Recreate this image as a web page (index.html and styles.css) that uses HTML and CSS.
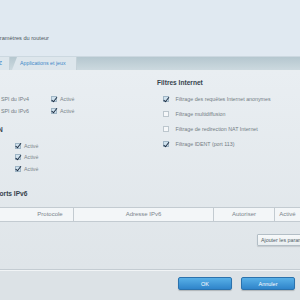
FILE: index.html
```html
<!DOCTYPE html>
<html lang="fr">
<head>
    <meta charset="UTF-8">
    <meta name="viewport" content="width=device-width, initial-scale=1.0">
    <title>Paramètres du routeur</title>
    <link rel="stylesheet" href="styles.css">
</head>
<body>
    <div class="page">
        <header class="top">
            <h1 class="title">Paramètres du routeur</h1>
        </header>

        <nav class="tabs">
            <a class="tab first">DMZ</a>
            <a class="tab">Applications et jeux</a>
        </nav>

        <main class="main">
            <div class="cols">
                <section class="col-left">
                    <h2>Pare-feu</h2>
                    <div class="rows spi">
                        <div class="row"><span class="lbl">Protection du pare-feu SPI du IPv4</span><span class="cb on"></span><span class="val">Activé</span></div>
                        <div class="row"><span class="lbl">Protection du pare-feu SPI du IPv6</span><span class="cb on"></span><span class="val">Activé</span></div>
                    </div>

                    <h2 class="vpn-title">Passthrough VPN</h2>
                    <div class="rows vpn">
                        <div class="row"><span class="lbl">IPSec Passthrough</span><span class="cb on"></span><span class="val">Activé</span></div>
                        <div class="row"><span class="lbl">PPTP Passthrough</span><span class="cb on"></span><span class="val">Activé</span></div>
                        <div class="row"><span class="lbl">L2TP Passthrough</span><span class="cb on"></span><span class="val">Activé</span></div>
                    </div>
                </section>

                <section class="col-right">
                    <h2>Filtres Internet</h2>
                    <div class="rows filters">
                        <div class="row"><span class="cb on"></span><span class="lbl">Filtrage des requêtes Internet anonymes</span></div>
                        <div class="row"><span class="cb"></span><span class="lbl">Filtrage multidiffusion</span></div>
                        <div class="row"><span class="cb"></span><span class="lbl">Filtrage de redirection NAT Internet</span></div>
                        <div class="row"><span class="cb on"></span><span class="lbl">Filtrage IDENT (port 113)</span></div>
                    </div>
                </section>
            </div>

            <section class="ports">
                <h2>Ouverture des ports IPv6</h2>
                <table class="grid">
                    <thead>
                        <tr>
                            <th class="c-desc">Description</th>
                            <th class="c-proto">Protocole</th>
                            <th class="c-addr">Adresse IPv6</th>
                            <th class="c-allow">Autoriser</th>
                            <th class="c-on">Activé</th>
                            <th class="c-edit"></th>
                        </tr>
                    </thead>
                </table>
                <div class="add-row">
                    <button class="add">Ajouter les paramètres IPv6</button>
                </div>
            </section>

            <footer class="actions">
                <button class="btn">OK</button>
                <button class="btn">Annuler</button>
            </footer>
        </main>
    </div>
</body>
</html>
```

FILE: styles.css
```css
html, body {
    margin: 0;
    height: 100%;
    overflow: hidden;
}

body {
    font-family: "Liberation Sans", Arial, sans-serif;
    background-color: #e0e9f1;
}

.page {
    margin-left: -60px;
    width: 400px;
}

.top {
    height: 56px;
    background-color: #e0e9f1;
    border-bottom: 1px solid #ccd8e0;
}

.title {
    margin: 0;
    padding: 34px 0 0 53px;
    font-size: 5.6px;
    line-height: 8px;
    font-weight: normal;
    color: #4d5860;
}

.tabs {
    display: flex;
    gap: 2px;
    height: 13px;
    padding-left: 30px;
    background: linear-gradient(#b5c7cf, #ccd9df);
    border-bottom: 1px solid #e9eef1;
}

.tab {
    width: 65px;
    padding-left: 8px;
    box-sizing: border-box;
    font-size: 5.3px;
    line-height: 13px;
    color: #3d87c8;
    background-color: #dde6ec;
    clip-path: polygon(5px 0, 100% 0, 100% 100%, 0 100%);
    box-shadow: inset -1px 0 0 #c4d1d8;
}

.tab.first {
    width: 40px;
    padding: 0 8px 0 0;
    text-align: right;
}

.main {
    background: linear-gradient(#e9eef2, #dde3e7);
    padding-top: 7px;
    height: 230px;
}

h2 {
    margin: 0;
    font-size: 6.6px;
    line-height: 10px;
    color: #36424c;
}

.cols {
    display: grid;
    grid-template-columns: 217px 1fr;
}

.col-left {
    padding-left: 7px;
}

.row {
    display: flex;
    align-items: center;
    font-size: 5.3px;
    color: #737c84;
}

.rows.spi {
    margin-top: 5.4px;
}

.rows.spi .row {
    height: 11.6px;
}

.rows.spi .lbl {
    width: 104px;
}

.vpn-title {
    margin-top: 8.4px;
}

.rows.vpn {
    margin-top: 5.1px;
}

.rows.vpn .row {
    height: 11.4px;
}

.rows.vpn .lbl {
    width: 68px;
}

.val {
    margin-left: 3px;
    color: #7b848b;
}

.rows.filters {
    margin-top: 3.7px;
    padding-left: 6px;
}

.rows.filters .row {
    height: 15px;
}

.rows.filters .lbl {
    margin-left: 6.5px;
}

.cb {
    position: relative;
    flex: none;
    width: 6px;
    height: 6px;
    box-sizing: border-box;
    border: 1px solid #bcc6cd;
    background-color: #f5f7f9;
}

.cb.on {
    border-color: #9fb5c5;
    background-color: #cfe1ed;
}

.cb.on::after {
    content: "";
    position: absolute;
    left: 1.2px;
    top: -1.5px;
    width: 1.8px;
    height: 4.5px;
    border: solid #1d2d42;
    border-width: 0 1.3px 1.3px 0;
    transform: rotate(38deg);
}

.ports {
    margin-top: 15.2px;
    padding-right: 5px;
}

.ports h2 {
    margin-left: 9px;
}

.grid {
    margin-top: 7.2px;
    width: 100%;
    border-collapse: collapse;
    table-layout: fixed;
}

.grid th {
    height: 13px;
    padding: 0;
    font-size: 6px;
    font-weight: normal;
    color: #7a848c;
    background-color: #f3f6f8;
    border-top: 1px solid #c3cbd1;
    border-bottom: 1px solid #c3cbd1;
    border-left: 1px solid #c3cbd1;
    text-align: center;
}

.grid .c-desc {
    width: 87px;
    border-left: none;
    color: transparent;
}

.grid .c-proto {
    width: 46px;
    border-left: none;
}

.grid .c-addr {
    width: 139px;
}

.grid .c-allow {
    width: 60px;
}

.grid .c-on {
    width: 25px;
}

.add-row {
    display: flex;
    justify-content: flex-end;
    margin-top: 12.3px;
}

.add {
    height: 12px;
    width: 78px;
    padding: 0 0 0 3px;
    text-align: left;
    font-family: inherit;
    font-size: 5.3px;
    color: #4f5c66;
    background: linear-gradient(#f7f9fa, #e9eef1);
    border: 1px solid #b3bec6;
    border-radius: 1px;
    box-shadow: 0 1px 1px rgba(0, 0, 0, 0.12);
}

.actions {
    display: flex;
    justify-content: flex-end;
    gap: 9px;
    margin-top: 23.5px;
    padding: 7px 45px 0 0;
    border-top: 1px solid #c4ccd2;
    box-shadow: inset 0 1px 0 #f1f4f6;
    height: 40px;
    background-color: #dce2e6;
}

.btn {
    width: 54px;
    height: 13px;
    padding: 0;
    font-family: inherit;
    font-size: 5.5px;
    color: #fff;
    background: linear-gradient(#58b0e7, #2f84ca);
    border: 1px solid #2b72ad;
    border-radius: 2px;
    box-shadow: 0 1px 1px rgba(0, 0, 0, 0.2);
    cursor: pointer;
}
```
